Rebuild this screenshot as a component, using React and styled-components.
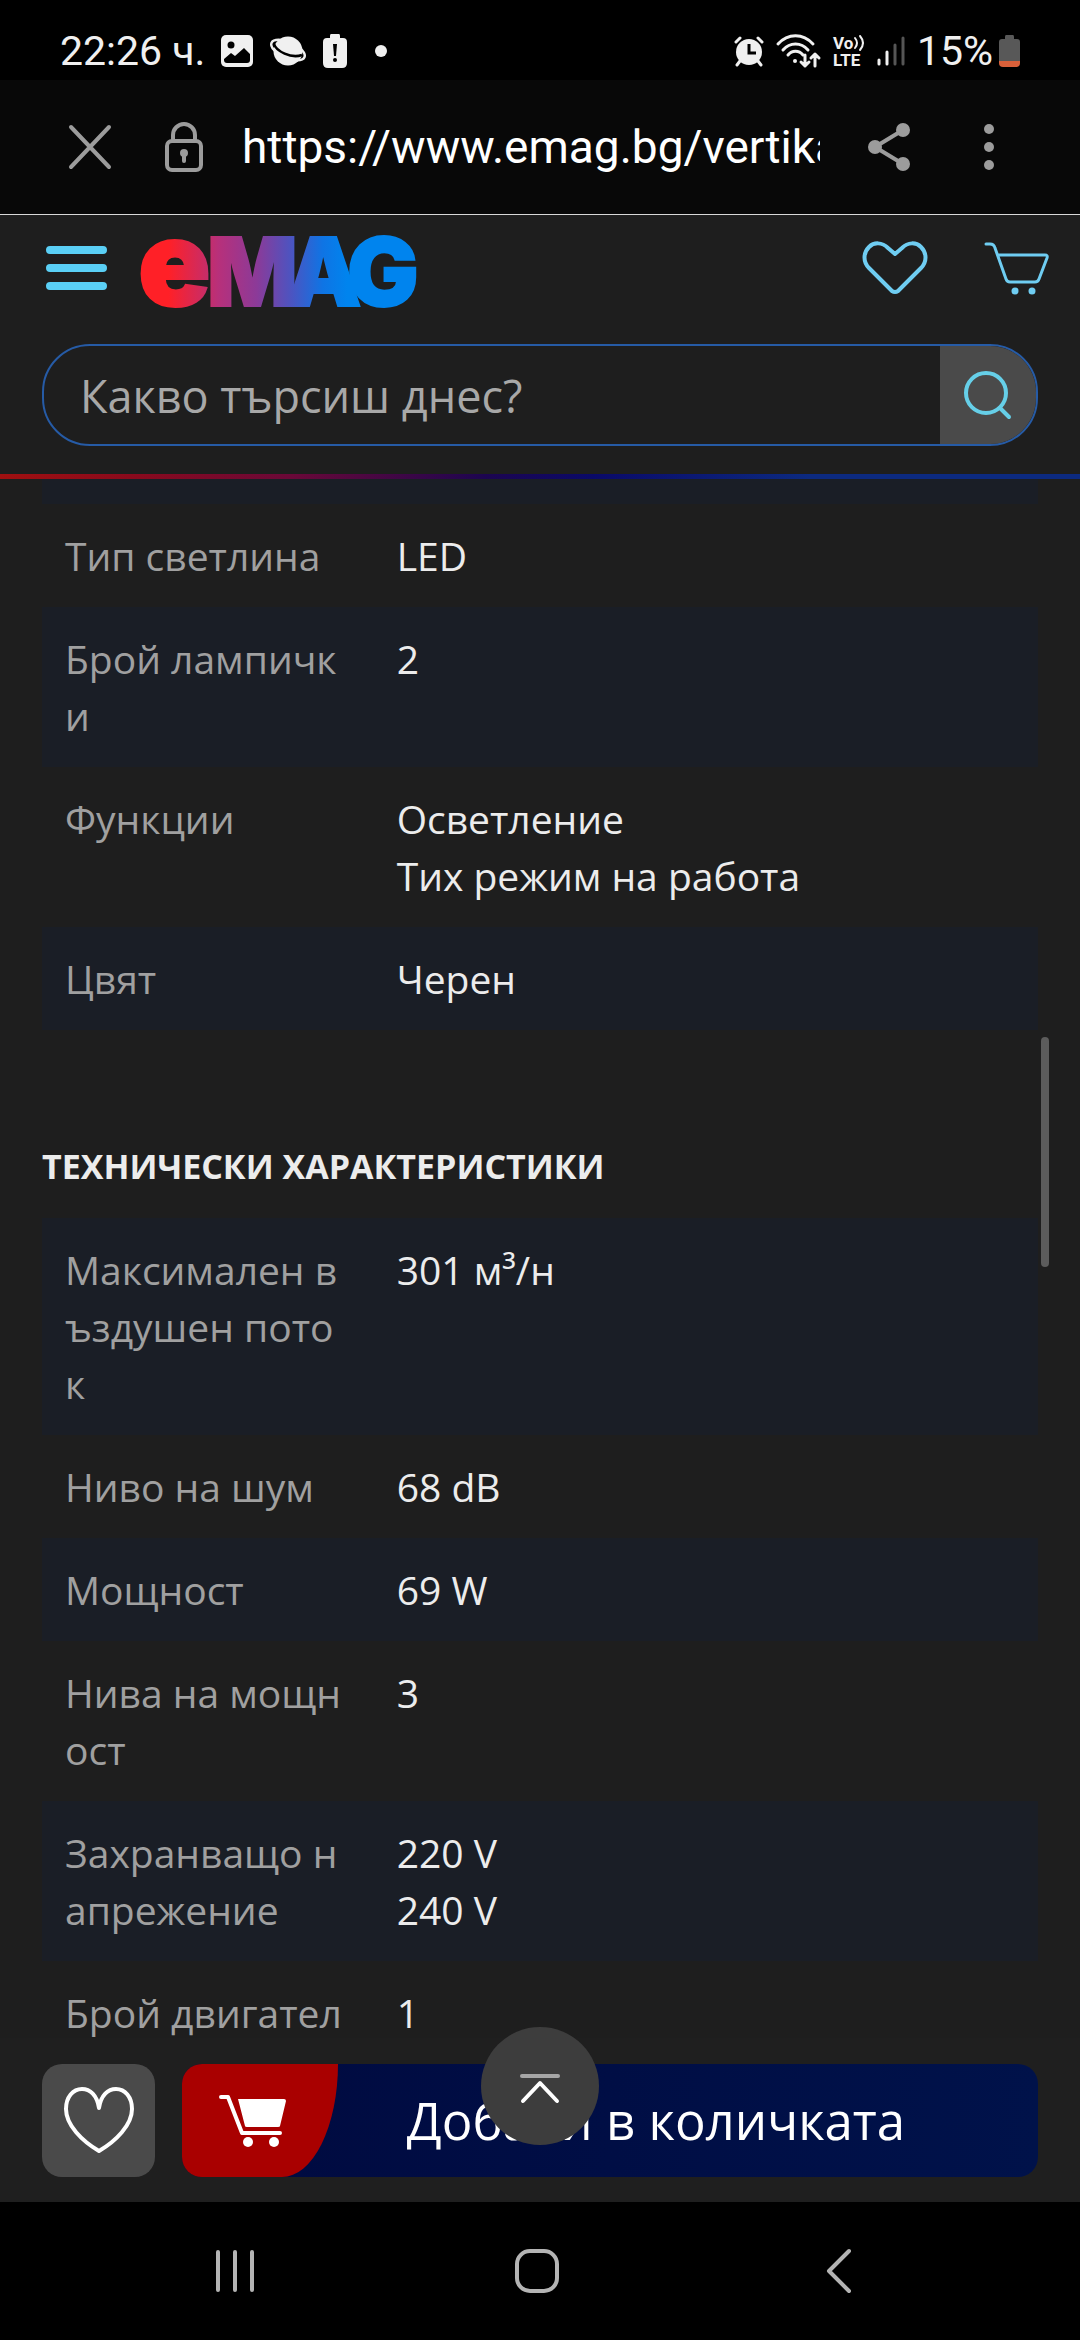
import styled, { createGlobalStyle } from "styled-components";

const GlobalStyle = createGlobalStyle`
  * {
    box-sizing: border-box;
  }
  body {
    margin: 0;
    background-color: #000000;
  }
  button,
  input {
    font: inherit;
    color: inherit;
    border: none;
    background: none;
    padding: 0;
    margin: 0;
    outline: none;
  }
  button {
    cursor: pointer;
  }
  svg {
    display: block;
    flex: none;
    overflow: visible;
  }
`;

const Screen = styled.div`
  height: 100vh;
  display: flex;
  flex-direction: column;
  overflow: hidden;
  background-color: #1e1e1e;
  font-family: "Open Sans", "Noto Sans", sans-serif;
`;

/* phone status bar */
const StatusBar = styled.div`
  height: 80px;
  flex: none;
  padding: 22px 60px 0 60px;
  display: flex;
  align-items: flex-start;
  justify-content: space-between;
  background-color: #000000;
  color: #f0f0f0;
  font-family: Roboto, sans-serif;
  font-size: 41px;
  line-height: 58px;
`;

const StatusGroup = styled.div`
  height: 58px;
  display: flex;
  align-items: center;
  gap: ${({ $gap }) => $gap}px;
`;

/* browser bar */
const BrowserBar = styled.div`
  height: 135px;
  flex: none;
  padding: 0 68px;
  display: flex;
  align-items: center;
  background-color: #080808;
  border-bottom: 1px solid #d8d8d8;
  color: #9c9c9c;
  .lock {
    margin: 0 38px 0 52px;
  }
  .share {
    margin: 0 56px 0 48px;
  }
`;

const Address = styled.input`
  flex: 1;
  min-width: 0;
  height: 64px;
  color: #ffffff;
  font-family: Roboto, sans-serif;
  font-size: 46px;
`;

const IconButton = styled.button`
  height: ${({ $height }) => $height || 66}px;
  flex: none;
  display: flex;
  align-items: center;
  justify-content: center;
`;

/* shop header */
const Header = styled.header`
  flex: none;
  padding: 20px 42px 28px;
`;

const TopRow = styled.div`
  height: 74px;
  margin: 0 -12px 35px 4px;
  display: flex;
  align-items: flex-start;
  a {
    margin-left: 34px;
  }
  .favorites {
    margin-left: auto;
  }
  .cart {
    margin-left: 56px;
  }
`;

const SearchForm = styled.form`
  height: 102px;
  display: flex;
  border: 2px solid #265ba6;
  border-radius: 48px;
  overflow: hidden;
  input {
    flex: 1;
    min-width: 0;
    padding: 0 36px;
    font-size: 45px;
    color: #ececec;
    &::placeholder {
      color: #a8a8a8;
      opacity: 1;
    }
  }
  button {
    width: 96px;
    display: flex;
    align-items: center;
    justify-content: center;
    background-color: #4a4a4a;
  }
`;

const BrandLine = styled.div`
  height: 5px;
  flex: none;
  background: linear-gradient(
    90deg,
    #a01010 0%,
    #8a0a1c 12%,
    #6a0838 27%,
    #1c0550 45%,
    #0a0a68 55%,
    #0c2a80 75%
  );
`;

/* specifications */
const Content = styled.main`
  position: relative;
  flex: 1;
  min-height: 0;
  overflow: hidden;
  padding: 0 42px;
`;

const RowEdge = styled.div`
  height: 25px;
  background-color: #1a1e26;
`;

const SpecTable = styled.table`
  width: 100%;
  table-layout: fixed;
  border-collapse: collapse;
  font-size: 39px;
  line-height: 57px;
  th,
  td {
    padding: 23px;
    text-align: left;
    vertical-align: top;
    font-weight: 400;
  }
  th {
    width: 33.3%;
    color: #a0a0a0;
    word-break: break-all;
  }
  td {
    color: #ececec;
  }
`;

const SpecRow = styled.tr`
  background-color: ${({ $shaded }) => ($shaded ? "#1a1e26" : "transparent")};
`;

const SectionTitle = styled.h2`
  margin: 108px 0 24px;
  font-size: 34px;
  line-height: 56px;
  font-weight: 700;
  color: #ececec;
  text-transform: uppercase;
`;

const ScrollThumb = styled.div`
  position: absolute;
  top: 558px;
  right: 31px;
  width: 8px;
  height: 230px;
  border-radius: 4px;
  background-color: #5c5c5c;
`;

/* buy bar */
const BuyBar = styled.div`
  position: relative;
  flex: none;
  padding: 26px 42px 25px;
  display: flex;
  gap: 27px;
  background-color: #1f1f1f;
`;

const FavoriteButton = styled.button`
  width: 113px;
  height: 113px;
  display: flex;
  align-items: center;
  justify-content: center;
  border-radius: 20px;
  background-color: #4a4a4a;
`;

const AddButton = styled.button`
  flex: 1;
  height: 113px;
  display: flex;
  border-radius: 20px;
  overflow: hidden;
  background: linear-gradient(90deg, #000a40, #00124a);
  color: #ffffff;
  font-size: 51px;
  line-height: 112px;
`;

const CartBadge = styled.span`
  width: 156px;
  height: 113px;
  padding-right: 14px;
  display: flex;
  align-items: center;
  justify-content: center;
  background-color: #a90000;
  border-bottom-right-radius: 56px 113px;
`;

const AddLabel = styled.span`
  flex: 1;
  padding-right: 64px;
`;

const ToTop = styled.button`
  position: absolute;
  top: -11px;
  left: 50%;
  width: 118px;
  height: 118px;
  margin-left: -59px;
  display: flex;
  align-items: center;
  justify-content: center;
  border-radius: 50%;
  background-color: #3d3d3d;
`;

/* phone navigation */
const NavBar = styled.nav`
  height: 138px;
  flex: none;
  padding: 0 90px 0 84px;
  display: grid;
  grid-template-columns: repeat(3, 1fr);
  background-color: #000000;
  color: #b4b4b4;
`;

const Stroked = ({ w, h, sw = 4, children, ...rest }) => (
  <svg
    width={w}
    height={h}
    viewBox={`0 0 ${w} ${h}`}
    fill="none"
    stroke="currentColor"
    strokeWidth={sw}
    strokeLinecap="round"
    strokeLinejoin="round"
    {...rest}
  >
    {children}
  </svg>
);

const PictureIcon = () => (
  <svg width="32" height="32" viewBox="0 0 32 32">
    <rect width="32" height="32" rx="5" fill="#f0f0f0" />
    <circle cx="10" cy="10" r="3.5" fill="#000" />
    <path d="M3 24l7-6 4 3 9-8 6 6v6q0 3-3 3H6q-3 0-3-3z" fill="#000" />
  </svg>
);

const PlanetIcon = () => (
  <svg width="38" height="32" viewBox="0 0 38 32">
    <circle cx="19" cy="16" r="14.5" fill="#f0f0f0" />
    <ellipse
      cx="19"
      cy="15"
      rx="18"
      ry="8"
      fill="none"
      stroke="#f0f0f0"
      strokeWidth="2.5"
      transform="rotate(24 19 15)"
    />
    <path d="M5 9c2 7 17 15 28 11" fill="none" stroke="#000" strokeWidth="2.6" />
  </svg>
);

const BatteryAlertIcon = () => (
  <svg width="24" height="34" viewBox="0 0 24 34">
    <path
      d="M8 0h8q1 0 1 2v2h3q4 0 4 4v21q0 5-5 5H5q-5 0-5-5V8q0-4 4-4h3V2q0-2 1-2z"
      fill="#f0f0f0"
    />
    <path d="M10 10h4l-1 12h-2z" fill="#000" />
    <circle cx="12" cy="26" r="2" fill="#000" />
  </svg>
);

const AlarmIcon = () => (
  <svg width="30" height="30" viewBox="0 0 30 30">
    <circle cx="15" cy="16" r="13" fill="#f0f0f0" />
    <path
      d="M2 6l4-4M28 6l-4-4M6 25l-3 4M24 25l3 4"
      stroke="#f0f0f0"
      strokeWidth="3"
      strokeLinecap="round"
    />
    <path d="M15 8v9h7" fill="none" stroke="#000" strokeWidth="3" />
  </svg>
);

const WifiIcon = () => (
  <Stroked w={45} h={34} sw={3}>
    <path d="M2 10C12-1 27-1 37 10M7 16c7-8 18-8 25 0M12 21c4-5 11-5 15 0" />
    <circle cx="19" cy="27" r="2" fill="currentColor" stroke="none" />
    <path d="M29 21v11M25 28l4 4 4-4M39 32V20M35 24l4-4 4 4" />
  </Stroked>
);

const VolteIcon = () => (
  <svg width="32" height="34" viewBox="0 0 32 34" fill="#f0f0f0">
    <g fontFamily="Roboto" fontWeight="700" fontSize="17">
      <text x="0" y="15">Vo</text>
      <text x="0" y="32">LTE</text>
    </g>
    <path
      d="M22 4q4 5 0 10M27 2q6 7 0 14"
      fill="none"
      stroke="#f0f0f0"
      strokeWidth="2"
      strokeLinecap="round"
    />
  </svg>
);

const SignalIcon = () => (
  <Stroked w={28} h={30} sw={3}>
    <path d="M2 24v4M10 16v12" />
    <path d="M18 9v19M26 2v26" stroke="#555555" />
  </Stroked>
);

const BatteryIcon = () => (
  <svg width="21" height="32" viewBox="0 0 21 32">
    <path
      d="M7 0h7q1 0 1 2v2h3q3 0 3 3v19H0V7q0-3 3-3h3V2q0-2 1-2z"
      fill="#585858"
    />
    <path d="M0 26h21v2q0 4-4 4H4q-4 0-4-4z" fill="#d9603a" />
  </svg>
);

/* each letter has its own size so that the e is as tall as the capitals */
const EmagLogo = () => (
  <svg width="275" height="74" viewBox="0 0 275 74" role="img" aria-label="eMAG">
    <defs>
      <linearGradient id="emag" gradientUnits="userSpaceOnUse" x1="0" y1="0" x2="275" y2="0">
        <stop offset="0.1" stopColor="#ff2027" />
        <stop offset="0.28" stopColor="#b8307a" />
        <stop offset="0.42" stopColor="#8c3a98" />
        <stop offset="0.55" stopColor="#4a55c2" />
        <stop offset="0.66" stopColor="#0f74e4" />
        <stop offset="0.75" stopColor="#0084ee" />
      </linearGradient>
    </defs>
    <text
      fill="url(#emag)"
      stroke="url(#emag)"
      strokeWidth="2"
      fontFamily="Inter"
      fontWeight="900"
      fontSize="95"
    >
      <tspan x="-3" y="71" fontSize="120">e</tspan>
      <tspan x="66" y="71">M</tspan>
      <tspan x="145" y="71">A</tspan>
      <tspan x="206" y="71">G</tspan>
    </text>
  </svg>
);

const lightSpecs = [
  ["Тип светлина", ["LED"]],
  ["Брой лампички", ["2"]],
  ["Функции", ["Осветление", "Тих режим на работа"]],
  ["Цвят", ["Черен"]],
];

const techSpecs = [
  ["Максимален въздушен поток", ["301 м³/н"]],
  ["Ниво на шум", ["68 dB"]],
  ["Мощност", ["69 W"]],
  ["Нива на мощност", ["3"]],
  ["Захранващо напрежение", ["220 V", "240 V"]],
  ["Брой двигател", ["1"]],
];

const Specs = ({ rows, shadedFirst }) => (
  <SpecTable>
    <tbody>
      {rows.map(([label, values], i) => (
        <SpecRow key={label} $shaded={(i % 2 === 0) === shadedFirst}>
          <th scope="row">{label}</th>
          <td>
            {values.map((value) => (
              <div key={value}>{value}</div>
            ))}
          </td>
        </SpecRow>
      ))}
    </tbody>
  </SpecTable>
);

const App = () => {
  return (
    <Screen>
      <GlobalStyle />
      <StatusBar>
        <StatusGroup $gap={16}>
          <span>22:26 ч.</span>
          <PictureIcon />
          <PlanetIcon />
          <BatteryAlertIcon />
          <svg width="36" height="12" viewBox="0 0 36 12">
            <circle cx="18" cy="6" r="6" fill="#f0f0f0" />
          </svg>
        </StatusGroup>
        <StatusGroup $gap={12}>
          <AlarmIcon />
          <WifiIcon />
          <VolteIcon />
          <SignalIcon />
          <StatusGroup $gap={6}>
            <span>15%</span>
            <BatteryIcon />
          </StatusGroup>
        </StatusGroup>
      </StatusBar>

      <BrowserBar>
        <IconButton aria-label="Затвори">
          <Stroked w={44} h={44}>
            <path d="M3 2l38 40M41 2L3 42" />
          </Stroked>
        </IconButton>
        <Stroked w={40} h={52} className="lock">
          <path d="M9 20v-6a11 11 0 0 1 22 0v6" />
          <rect x="3" y="20" width="34" height="29" rx="5" />
          <path d="M20 33v7" strokeWidth="4" />
          <circle cx="20" cy="32" r="2" />
        </Stroked>
        <Address
          aria-label="Адрес"
          type="text"
          readOnly
          value="https://www.emag.bg/vertikalen"
        />
        <IconButton aria-label="Сподели" className="share">
          <Stroked w={42} h={48}>
            <path d="M35 7L7 24l28 17" />
            <g fill="currentColor" stroke="none">
              <circle cx="35" cy="7" r="7" />
              <circle cx="7" cy="24" r="7" />
              <circle cx="35" cy="41" r="7" />
            </g>
          </Stroked>
        </IconButton>
        <IconButton aria-label="Още">
          <svg width="46" height="46" viewBox="0 0 46 46" fill="currentColor">
            <circle cx="23" cy="5" r="5" />
            <circle cx="23" cy="23" r="5" />
            <circle cx="23" cy="41" r="5" />
          </svg>
        </IconButton>
      </BrowserBar>

      <Header>
        <TopRow>
          <IconButton aria-label="Меню">
            <Stroked w={61} h={46} sw={8} stroke="#5acff5">
              <path d="M4 5h53M4 23h53M4 41h53" />
            </Stroked>
          </IconButton>
          <a href="#home">
            <EmagLogo />
          </a>
          <IconButton aria-label="Любими" className="favorites">
            <Stroked w={66} h={54} stroke="#6fcdf2">
              <path d="M33 13L26 7C20 1 12 1 7 6c-6 6-6 15 0 21l23 23q3 2 6 0l23-23c6-6 6-15 0-21-5-5-13-5-19 1z" />
            </Stroked>
          </IconButton>
          <IconButton aria-label="Количка" className="cart">
            <Stroked w={66} h={54} sw={3} stroke="#6fcdf2">
              <path d="M2 3h4q4 0 5 4l11 31q1 3 4 3h25q3 0 4-3l8-21q1-3-2-3H14" />
              <g fill="#6fcdf2" stroke="none">
                <circle cx="31" cy="50" r="3.5" />
                <circle cx="48" cy="50" r="3.5" />
              </g>
            </Stroked>
          </IconButton>
        </TopRow>
        <SearchForm>
          <input
            type="text"
            aria-label="Търсене"
            placeholder="Какво търсиш днес?"
          />
          <button type="button" aria-label="Търси">
            <Stroked w={50} h={50} stroke="#66cfe8">
              <circle cx="23" cy="23" r="20" />
              <path d="M37 38l9 9" />
            </Stroked>
          </button>
        </SearchForm>
      </Header>
      <BrandLine />

      <Content>
        <RowEdge />
        <Specs rows={lightSpecs} shadedFirst={false} />
        <SectionTitle>Технически характеристики</SectionTitle>
        <Specs rows={techSpecs} shadedFirst />
        <ScrollThumb />
      </Content>

      <BuyBar>
        <FavoriteButton aria-label="Добави в любими">
          <Stroked w={70} h={68} stroke="#ffffff">
            <path d="M35 21C33 8 26 2 18 2 9 2 2 10 2 22c0 16 16 32 33 42 17-10 33-26 33-42C68 10 61 2 52 2c-8 0-15 6-17 19z" />
          </Stroked>
        </FavoriteButton>
        <AddButton>
          <CartBadge>
            <svg width="68" height="54" viewBox="0 0 68 54" fill="#ffffff">
              <path d="M19 5h46q2 0 2 2l-6 25q0 1-2 1H28q-2 0-2-1z" />
              <path
                d="M2 3h7l14 36h38"
                fill="none"
                stroke="#ffffff"
                strokeWidth="4"
                strokeLinecap="round"
                strokeLinejoin="round"
              />
              <circle cx="29" cy="48" r="5" />
              <circle cx="55" cy="48" r="5" />
            </svg>
          </CartBadge>
          <AddLabel>Добави в количката</AddLabel>
        </AddButton>
        <ToTop aria-label="Нагоре">
          <Stroked w={42} h={32} stroke="#ffffff">
            <path d="M3 6h36" stroke="#a6a6a6" />
            <path d="M4 31l17-18 17 18" />
          </Stroked>
        </ToTop>
      </BuyBar>

      <NavBar>
        <IconButton aria-label="Скорошни" $height={138}>
          <Stroked w={40} h={44}>
            <path d="M3 3v38M20 3v38M37 3v38" />
          </Stroked>
        </IconButton>
        <IconButton aria-label="Начало" $height={138}>
          <Stroked w={44} h={44}>
            <rect x="2" y="2" width="40" height="40" rx="13" />
          </Stroked>
        </IconButton>
        <IconButton aria-label="Назад" $height={138}>
          <Stroked w={26} h={46}>
            <path d="M23 3L3 23l20 20" />
          </Stroked>
        </IconButton>
      </NavBar>
    </Screen>
  );
};

export default App;
